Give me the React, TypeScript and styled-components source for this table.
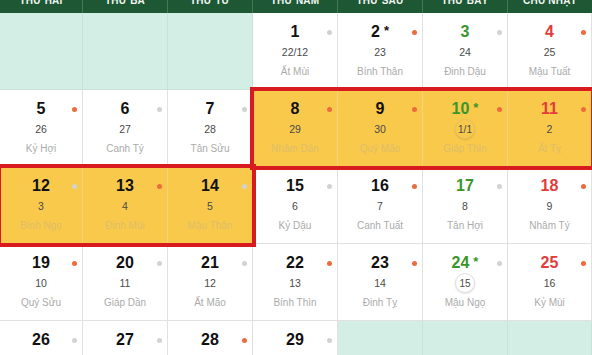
import React from "react";
import styled, { createGlobalStyle, css } from "styled-components";

const Global = createGlobalStyle`
  html, body { margin: 0; padding: 0; overflow: hidden; background: #fff; }
  body { font-family: "Liberation Sans", Arial, sans-serif; }
`;

const COLS = "83px 85px 85px 85px 85px 85px 84px";

const Page = styled.div`
  width: 592px;
  margin-top: -13px;
`;

const Header = styled.div`
  display: grid;
  grid-template-columns: ${COLS};
  height: 26px;
  background: #1e5733;
`;

const HeadCell = styled.div`
  display: flex;
  align-items: center;
  justify-content: center;
  border-right: 1px solid #3f7a52;
  color: #f2f7f3;
  font-size: 10px;
  font-weight: 700;
  letter-spacing: 0.2px;
  &:last-child { border-right: none; }
`;

const Grid = styled.div`
  display: grid;
  grid-template-columns: ${COLS};
  grid-auto-rows: 77px;
`;

type Tone = "empty" | "plain" | "gold";

const Cell = styled.div<{ $row: number; $col: number; $tone: Tone }>`
  grid-row: ${(p) => p.$row};
  grid-column: ${(p) => p.$col};
  position: relative;
  box-sizing: border-box;
  border-right: 1px solid #e1e1e1;
  border-bottom: 1px solid #e1e1e1;
  display: flex;
  flex-direction: column;
  align-items: center;
  padding-top: 9px;
  background: #fff;
  ${(p) =>
    p.$tone === "empty" &&
    css`
      background: #d3eee5;
      border-color: #c9e2da;
    `}
  ${(p) =>
    p.$tone === "gold" &&
    css`
      background: #f9c94c;
      border-color: #f3d27e;
    `}
`;

type NumColor = "black" | "green" | "red";
const numColors: Record<NumColor, string> = {
  black: "#111111",
  green: "#3a962b",
  red: "#e43b3b",
};

const DayLine = styled.div`
  display: flex;
  align-items: flex-start;
  height: 20px;
  line-height: 20px;
`;

const DayNum = styled.span<{ $color: NumColor }>`
  font-size: 16px;
  font-weight: 700;
  color: ${(p) => numColors[p.$color]};
`;

const Star = styled.span<{ $color: NumColor }>`
  font-size: 13px;
  font-weight: 700;
  line-height: 17px;
  margin-left: 4px;
  color: ${(p) => numColors[p.$color]};
`;

const Lunar = styled.div`
  height: 20px;
  line-height: 20px;
  font-size: 10.5px;
  color: #4a4a4a;
`;

const LunarRing = styled.div<{ $tone: Tone }>`
  width: 20px;
  height: 20px;
  box-sizing: border-box;
  border-radius: 50%;
  border: 1px solid ${(p) => (p.$tone === "gold" ? "#e9c060" : "#e0e0e0")};
  box-shadow: 0 1px 2px rgba(0, 0, 0, 0.12);
  background: ${(p) => (p.$tone === "gold" ? "#f9c94c" : "#fff")};
  display: flex;
  align-items: center;
  justify-content: center;
  font-size: 10px;
  color: #4a4a4a;
`;

const CanChi = styled.div<{ $tone: Tone }>`
  height: 20px;
  line-height: 20px;
  font-size: 10px;
  color: ${(p) => (p.$tone === "gold" ? "#dfbd68" : "#ababab")};
`;

const Dot = styled.span<{ $hot: boolean }>`
  position: absolute;
  top: 17px;
  right: 5px;
  width: 5px;
  height: 5px;
  border-radius: 50%;
  background: ${(p) => (p.$hot ? "#ee6b3d" : "#d2d2d2")};
`;

const Frame = styled.div<{ $row: number; $from: number; $to: number }>`
  grid-row: ${(p) => p.$row};
  grid-column: ${(p) => p.$from} / ${(p) => p.$to};
  margin: -3px -3px -3px -3px;
  border: 4px solid #d81b1e;
  box-sizing: border-box;
  position: relative;
  z-index: 2;
  pointer-events: none;
`;

type Day = {
  d: number;
  lunar: string;
  cc: string;
  hot: boolean;
  color?: NumColor;
  star?: boolean;
  ring?: boolean;
  gold?: boolean;
};

const HEADS = ["THỨ HAI", "THỨ BA", "THỨ TƯ", "THỨ NĂM", "THỨ SÁU", "THỨ BẢY", "CHỦ NHẬT"];

const cells: (Day | null)[] = [
  null, null, null,
  { d: 1, lunar: "22/12", cc: "Ất Mùi", hot: false },
  { d: 2, lunar: "23", cc: "Bính Thân", hot: true, star: true },
  { d: 3, lunar: "24", cc: "Đinh Dậu", hot: false, color: "green" },
  { d: 4, lunar: "25", cc: "Mậu Tuất", hot: true, color: "red" },

  { d: 5, lunar: "26", cc: "Kỷ Hợi", hot: true },
  { d: 6, lunar: "27", cc: "Canh Tý", hot: false },
  { d: 7, lunar: "28", cc: "Tân Sửu", hot: false },
  { d: 8, lunar: "29", cc: "Nhâm Dần", hot: true, gold: true },
  { d: 9, lunar: "30", cc: "Quý Mão", hot: true, gold: true },
  { d: 10, lunar: "1/1", cc: "Giáp Thìn", hot: true, gold: true, color: "green", star: true, ring: true },
  { d: 11, lunar: "2", cc: "Ất Tỵ", hot: true, gold: true, color: "red" },

  { d: 12, lunar: "3", cc: "Bính Ngọ", hot: false, gold: true },
  { d: 13, lunar: "4", cc: "Đinh Mùi", hot: true, gold: true },
  { d: 14, lunar: "5", cc: "Mậu Thân", hot: false, gold: true },
  { d: 15, lunar: "6", cc: "Kỷ Dậu", hot: false },
  { d: 16, lunar: "7", cc: "Canh Tuất", hot: true },
  { d: 17, lunar: "8", cc: "Tân Hợi", hot: false, color: "green" },
  { d: 18, lunar: "9", cc: "Nhâm Tý", hot: true, color: "red" },

  { d: 19, lunar: "10", cc: "Quý Sửu", hot: true },
  { d: 20, lunar: "11", cc: "Giáp Dần", hot: false },
  { d: 21, lunar: "12", cc: "Ất Mão", hot: false },
  { d: 22, lunar: "13", cc: "Bính Thìn", hot: true },
  { d: 23, lunar: "14", cc: "Đinh Tỵ", hot: true },
  { d: 24, lunar: "15", cc: "Mậu Ngọ", hot: false, color: "green", star: true, ring: true },
  { d: 25, lunar: "16", cc: "Kỷ Mùi", hot: true, color: "red" },

  { d: 26, lunar: "17", cc: "Canh Thân", hot: false },
  { d: 27, lunar: "18", cc: "Tân Dậu", hot: false },
  { d: 28, lunar: "19", cc: "Nhâm Tuất", hot: true },
  { d: 29, lunar: "20", cc: "Quý Hợi", hot: false },
  null, null, null,
];

export default function App() {
  return (
    <>
      <Global />
      <Page>
        <Header>
          {HEADS.map((h) => (
            <HeadCell key={h}>{h}</HeadCell>
          ))}
        </Header>
        <Grid>
          {cells.map((c, i) => {
            const row = Math.floor(i / 7) + 1;
            const col = (i % 7) + 1;
            if (!c) return <Cell key={i} $row={row} $col={col} $tone="empty" />;
            const tone: Tone = c.gold ? "gold" : "plain";
            const color = c.color ?? "black";
            return (
              <Cell key={i} $row={row} $col={col} $tone={tone}>
                <DayLine>
                  <DayNum $color={color}>{c.d}</DayNum>
                  {c.star && <Star $color={color}>*</Star>}
                </DayLine>
                {c.ring ? (
                  <LunarRing $tone={tone}>{c.lunar}</LunarRing>
                ) : (
                  <Lunar>{c.lunar}</Lunar>
                )}
                <CanChi $tone={tone}>{c.cc}</CanChi>
                <Dot $hot={c.hot} />
              </Cell>
            );
          })}
          <Frame $row={2} $from={4} $to={8} />
          <Frame $row={3} $from={1} $to={4} />
        </Grid>
      </Page>
    </>
  );
}
